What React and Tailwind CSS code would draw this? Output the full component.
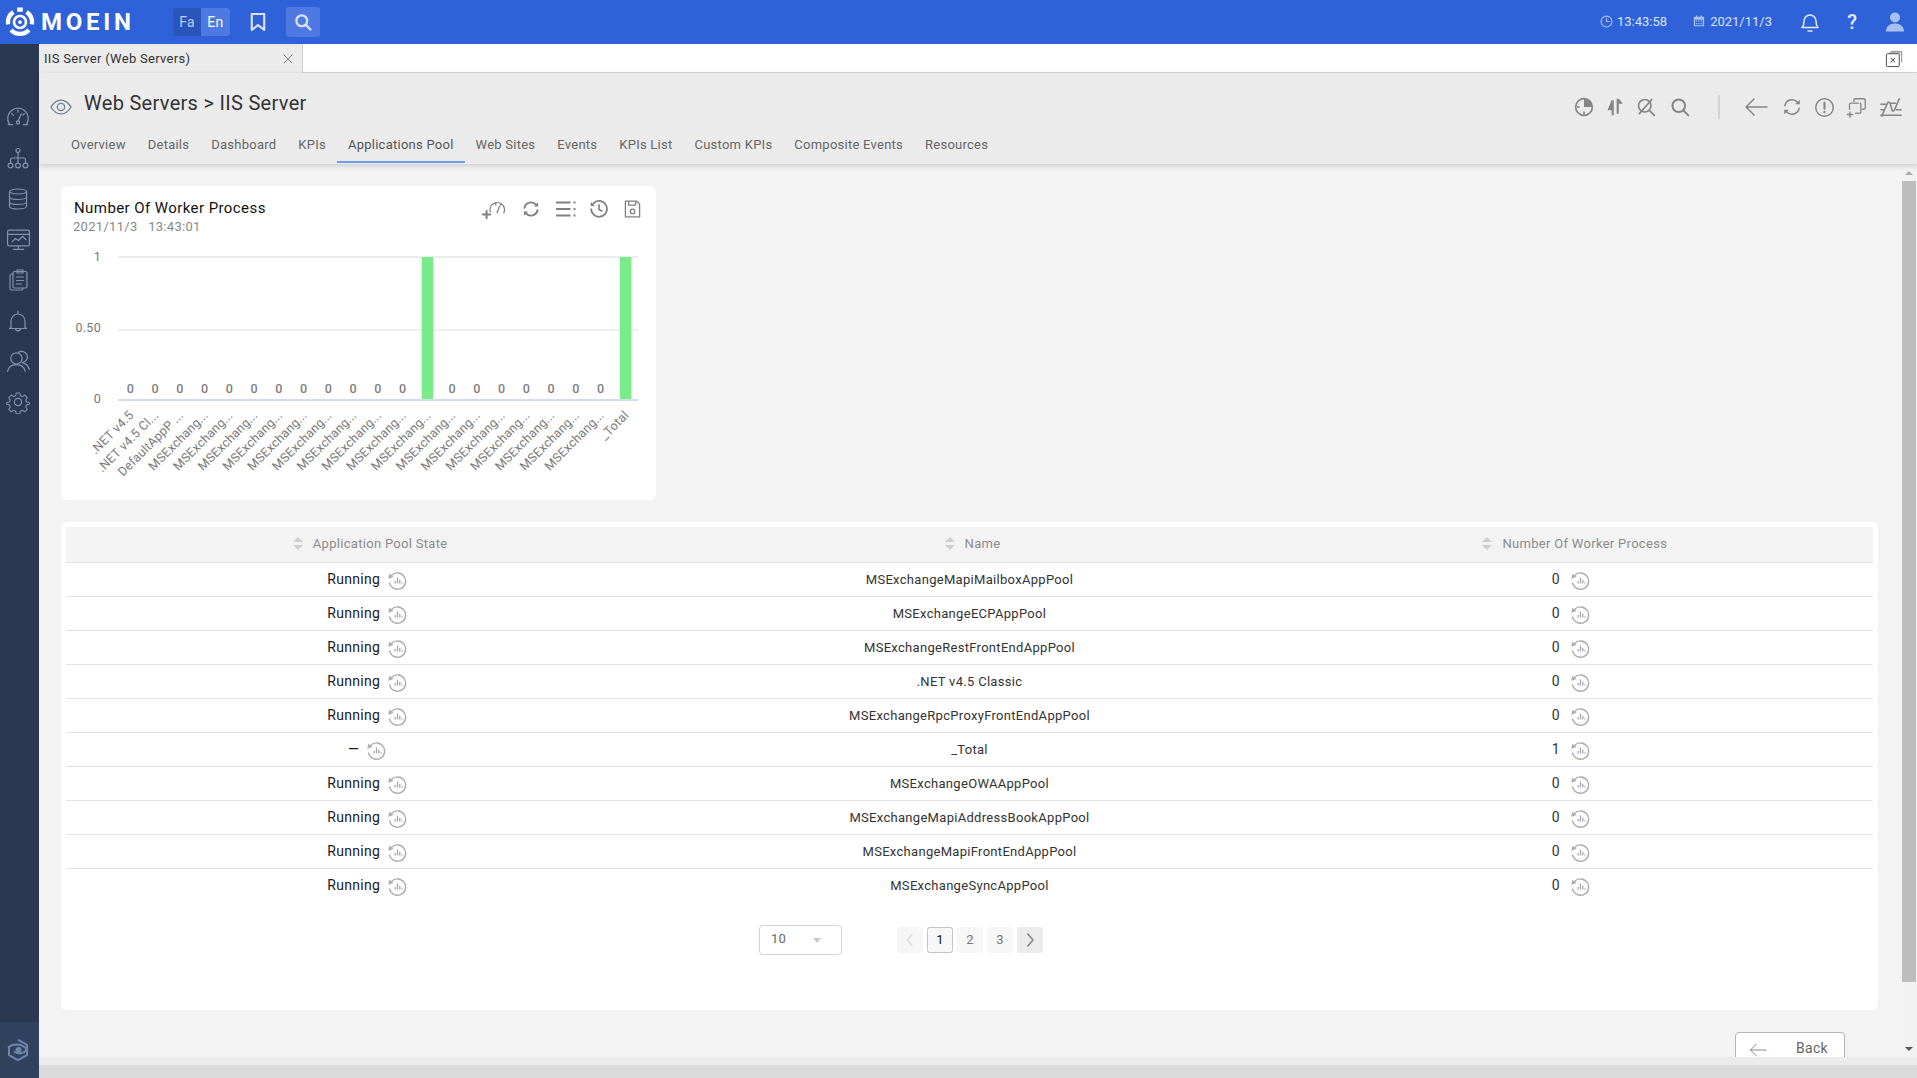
import React from "react";

const Svg = ({ className = "", vb = "0 0 24 24", sw = 1.5, children }) => (
  <svg viewBox={vb} fill="none" stroke="currentColor" strokeWidth={sw} strokeLinecap="round" strokeLinejoin="round" className={className}>
    {children}
  </svg>
);

const Logo = () => (
  <svg viewBox="0 0 32 32" className="w-[30px] h-[30px] text-white shrink-0" fill="none" stroke="currentColor">
    <path d="M9 5.500A13 13 0 0 0 3.400 18.500" strokeWidth="4.600" />
    <path d="M23 5.500A13 13 0 0 1 28.600 18.500" strokeWidth="4.600" />
    <path d="M6.500 24.500A13 13 0 0 0 25.500 24.500" strokeWidth="4.600" />
    <path d="M13 2.800h6" strokeWidth="4.600" />
    <circle cx="16" cy="16" r="6.400" strokeWidth="2.800" />
    <circle cx="16" cy="16" r="2" fill="currentColor" strokeWidth="0" />
  </svg>
);

const HistBars = ({ className = "" }) => (
  <svg viewBox="0 0 24 24" fill="none" className={className}>
    <path d="M5.400 6.600A9.800 9.800 0 1 1 3 15.500" stroke="currentColor" strokeWidth="1.700" strokeLinecap="round" />
    <path d="M1.500 10.500L2.600 4.500 8 8.300z" fill="currentColor" />
    <path d="M9 13.200h1.500v3H9zM11.800 9h1.500v7.200h-1.500zM14.600 11.800h1.500v4.400h-1.500zM17.300 14.800h1.500v1.400h-1.500z" fill="#a4a4b2" />
  </svg>
);

const Sync = ({ className = "", sw = 2 }) => (
  <Svg className={className} sw={sw}>
    <path d="M4.200 10.500A8 8 0 0 1 18 6.800" />
    <path d="M19.800 13.500A8 8 0 0 1 6 17.200" />
    <path d="M20.500 4v5h-5zM3.500 20v-5h5z" fill="currentColor" stroke="none" />
  </Svg>
);

const sideIcons = [
  <Svg key="a" sw={1.200} className="w-[26px] h-[26px]"><path d="M4 18.500a9.500 9.500 0 1 1 16 0M3 19h4M17 19h4M12 16l3-7M12 5.500v2M6.200 9l1.500 1.300M17.800 9l-1.500 1.300" /><circle cx="12" cy="17" r="1.400" /></Svg>,
  <Svg key="b" sw={1.200} className="w-[24px] h-[24px]"><circle cx="12" cy="4.500" r="2" /><path d="M12 6.500V12M4.500 17v-3a2 2 0 0 1 2-2h11a2 2 0 0 1 2 2v3M12 12v5" /><circle cx="4.500" cy="19.500" r="2.400" /><circle cx="12" cy="19.500" r="2.400" /><circle cx="19.500" cy="19.500" r="2.400" /></Svg>,
  <Svg key="c" sw={1.200} className="w-[24px] h-[24px]"><ellipse cx="12" cy="4.500" rx="8.500" ry="2.500" /><path d="M3.500 4.500v15c0 1.400 3.800 2.500 8.500 2.500s8.500-1.100 8.500-2.500v-15M3.500 10c0 1.400 3.800 2.500 8.500 2.500s8.500-1.100 8.500-2.500M3.500 15c0 1.400 3.800 2.500 8.500 2.500s8.500-1.100 8.500-2.500" /></Svg>,
  <Svg key="d" sw={1.200} className="w-[25px] h-[25px]"><rect x="1.500" y="3" width="21" height="15" rx="1.500" /><path d="M1.500 7h21M12 18v3.500M7 21.500h10M6 14l3-3 3 2 4-4 3 3" /></Svg>,
  <Svg key="e" sw={1.200} className="w-[24px] h-[24px]"><path d="M7 6H5.800A1.800 1.800 0 0 0 4 7.800v12.400A1.800 1.800 0 0 0 5.800 22h9.400a1.800 1.800 0 0 0 1.800-1.800V20" /><rect x="7" y="3.500" width="14" height="16.500" rx="1.600" /><path d="M11 2h6v3h-6zM10.500 9h7M10.500 12.500h7M10.500 16h5" /></Svg>,
  <Svg key="f" sw={1.200} className="w-[24px] h-[24px]"><path d="M12 2v2M5 18.500V12a7 7 0 0 1 14 0v6.500l1.500 1H3.500zM9.500 20a2.600 2.600 0 0 0 5 0" /></Svg>,
  <Svg key="g" sw={1.200} className="w-[25px] h-[25px]"><circle cx="10" cy="9" r="5.400" /><path d="M1.500 21.500c1-4.200 4-6.500 8.500-6.500s7.500 2.300 8.500 6.500M12 3.200A5.400 5.400 0 1 1 15.500 13c3.200.6 5.700 3 7 6.500" /></Svg>,
  <Svg key="h" sw={1.200} className="w-[24px] h-[24px]"><circle cx="12" cy="12" r="3.600" /><path d="M10 2h4l.6 3 2.300 1 2.600-1.700 2.800 2.800-1.700 2.600 1 2.300 3 .6v2l-3 .6-1 2.300 1.700 2.600-2.800 2.800-2.600-1.700-2.300 1-.6 3h-4l-.6-3-2.300-1-2.600 1.700-2.800-2.800 1.700-2.600-1-2.300-3-.6v-2l3-.6 1-2.300-1.700-2.600 2.800-2.800 2.600 1.700 2.300-1z" transform="translate(1.200 1.200) scale(.9)" /></Svg>,
];

const Sidebar = () => (
  <aside className="w-[39px] shrink-0 bg-[#2a3852] flex flex-col text-[#8293ad]">
    <div className="flex-1 pt-[53px] pr-[3px] flex flex-col">
      {sideIcons.map((ic, i) => (
        <div key={i} className="h-[40.700px] flex items-center justify-center">{ic}</div>
      ))}
    </div>
    <div className="h-[56px] pr-[3px] bg-[#31425f] flex items-center justify-center text-[#6e86aa]">
      <svg viewBox="0 0 24 24" className="w-[24px] h-[24px]" fill="none" stroke="currentColor" strokeWidth="2">
        <path d="M12 1.800l9 5v10.400l-9 5-9-5v-9" />
        <path d="M2 9.500C8 4.500 16 6 21 11.500c-3 4.200-9 5.200-13 2" />
        <circle cx="12.500" cy="12" r="3" fill="currentColor" stroke="none" />
      </svg>
    </div>
  </aside>
);

const TopBar = () => (
  <header className="h-[44px] shrink-0 bg-[#2f62d9] flex items-center text-[#d9e4fb]">
    <div className="ml-[5px] w-[30px]"><Logo /></div>
    <span className="ml-[6px] w-[96px] font-bold text-[24px] leading-none tracking-[3.700px] text-white">MOEIN</span>
    <div className="ml-[36px] flex h-[28px] text-[14px]">
      <span className="w-[28px] bg-[#2a55bb] rounded-l-[3px] flex items-center justify-center text-[#bcd0f7]">Fa</span>
      <span className="w-[29px] bg-[#4f79e2] rounded-r-[3px] flex items-center justify-center text-white">En</span>
    </div>
    <svg viewBox="0 0 18 22" className="ml-[20px] w-[16px] h-[20px]" fill="none" stroke="currentColor" strokeWidth="2.400" strokeLinejoin="round"><path d="M2 2h14v18l-7-5.500L2 20z" /></svg>
    <div className="ml-[20px] w-[34px] h-[30px] bg-[#4f79e2] rounded-[3px] flex items-center justify-center">
      <Svg className="w-[20px] h-[20px]" sw={2.800}><circle cx="10.500" cy="10.500" r="6.500" /><path d="M15.500 15.500L21 21" /></Svg>
    </div>
    <div className="ml-auto flex items-center tracking-normal">
      <Svg className="w-[13px] h-[13px] text-[#a9c0f2] -mt-[2px]" sw={2}><circle cx="12" cy="12" r="10" /><path d="M12 6v6h5" /></Svg>
      <span className="ml-[4px] text-[13px]">13:43:58</span>
      <svg viewBox="0 0 14 14" className="ml-[26px] w-[12px] h-[12px] text-[#a9c0f2] -mt-[2px]" fill="currentColor"><path d="M1 2h2.500V.5h1.500V2h4V.5h1.500V2H13v11H1zM2.500 5.500V12h9V5.500z" /><path d="M3.500 6.500h1.500V8H3.500zM6.200 6.500h1.500V8H6.200zM9 6.500h1.500V8H9zM3.500 9.200h1.500v1.500H3.500zM6.200 9.200h1.500v1.500H6.200zM9 9.200h1.500v1.500H9z" /></svg>
      <span className="ml-[5px] text-[13px]">2021/11/3</span>
      <Svg className="ml-[26px] w-[24px] h-[24px] text-[#e3ebfc]" sw={1.500}><path d="M4 17.500c1.500-1.500 2-3 2-6.500a6 6 0 0 1 12 0c0 3.500.5 5 2 6.500zM10 21h4" /></Svg>
      <span className="ml-[23px] w-[14px] text-center text-[20px] font-medium leading-none text-[#e3ebfc]">?</span>
      <svg viewBox="0 0 20 20" className="ml-[26px] mr-[12px] w-[20px] h-[20px] text-[#a9c0f2]" fill="currentColor"><circle cx="10" cy="5.500" r="5" /><path d="M1 19.500c0-5 3.500-8 9-8s9 3 9 8z" /></svg>
    </div>
  </header>
);

const TabBar = () => (
  <div className="h-[29px] shrink-0 bg-white border-b border-[#d6d6d6] flex items-stretch">
    <div className="w-[264px] bg-[#ebebeb] border-r border-[#d0d0d0] flex items-center pl-[5px] pr-[8px] -mb-px">
      <span className="text-[13px] text-[#333] flex-1">IIS Server (Web Servers)</span>
      <Svg className="w-[12px] h-[12px] text-[#777]" sw={1.800}><path d="M4 4l16 16M20 4L4 20" /></Svg>
    </div>
    <div className="ml-auto mr-[13px] flex items-center">
      <svg viewBox="0 0 20 20" className="w-[19px] h-[19px]" fill="none" stroke="#555" strokeWidth="1">
        <path d="M6 2.500h11.500V14" stroke="#8a8a8a" /><path d="M4.500 4h11.500v1" stroke="#8a8a8a" />
        <rect x="1.500" y="5" width="13.500" height="13.500" rx="1" stroke="#444" />
        <path d="M6 9.500l4.500 4.500M10.500 9.500L6 14" stroke="#333" />
      </svg>
    </div>
  </div>
);

const tabs = ["Overview", "Details", "Dashboard", "KPIs", "Applications Pool", "Web Sites", "Events", "KPIs List", "Custom KPIs", "Composite Events", "Resources"];

const ActionIcons = () => (
  <div className="flex items-center text-[#858585]">
    <Svg className="w-[20px] h-[20px]" sw={2}><circle cx="12" cy="12" r="10" /><path d="M12 2v10h10A10 10 0 0 0 12 2z" fill="currentColor" stroke="none" /><path d="M12 18v2M4 12h2" /></Svg>
    <svg viewBox="0 0 24 24" className="ml-[11px] w-[20px] h-[20px]" fill="currentColor"><path d="M8 4h2.500v18H8v-6H3zM14 20V2h2.500L21.500 8H16.500v12z" /></svg>
    <Svg className="ml-[11px] w-[20px] h-[20px]" sw={2}><circle cx="10.500" cy="10.500" r="7.500" /><path d="M16 16l6 6M4 20L19 3" /></Svg>
    <Svg className="ml-[14px] w-[20px] h-[20px]" sw={2.400}><circle cx="10.500" cy="10.500" r="7.500" /><path d="M16 16l6 6" /></Svg>
    <div className="ml-[28px] w-[2px] h-[24px] bg-[#d2d2d2]" />
    <Svg className="ml-[24px] w-[24px] h-[24px]" sw={1.500}><path d="M23 12H2M10 4l-8 8 8 8" /></Svg>
    <Sync className="ml-[13px] w-[22px] h-[22px]" sw={1.700} />
    <Svg className="ml-[11px] w-[21px] h-[21px]" sw={1.600}><circle cx="12" cy="12" r="10" /><path d="M12 6.500v7M12 17v.4" strokeWidth="2.400" /></Svg>
    <Svg className="ml-[11px] w-[21px] h-[21px]" sw={1.500}><path d="M9 5V3.500A1.500 1.500 0 0 1 10.500 2h10A1.500 1.500 0 0 1 22 3.500v9a1.500 1.500 0 0 1-1.500 1.500H19M14 7H5.500A1.500 1.500 0 0 0 4 8.500V14M16 7a1.500 1.500 0 0 1 1 1.500V17a1.500 1.500 0 0 1-1.500 1.500H11M4.500 17v6M1.500 20h6" /></Svg>
    <Svg className="ml-[11px] mr-[13px] w-[26px] h-[22px]" sw={1.700}><path d="M2 22l6-14c1-2 2-2 3 0l2 7c.6 2 2 2 3 0l5-12M1 9h5M12 8h5M1 15h4M18 15h5M1 21h22" /></Svg>
  </div>
);

const PageHeader = () => (
  <div className="h-[91px] shrink-0 bg-[#ebebeb] shadow-[0_2px_5px_rgba(0,0,0,0.16)] relative z-10 flex flex-col">
    <div className="h-[62px] flex items-center justify-between pl-[11px]">
      <div className="flex items-center">
        <Svg className="w-[22px] h-[22px] text-[#6f7f99] mt-[6px]" sw={1.400}><path d="M1 12c3-5 6.500-7.500 11-7.500S20 7 23 12c-3 5-6.500 7.500-11 7.500S4 17 1 12z" /><circle cx="12" cy="12" r="4" /></Svg>
        <span className="ml-[12px] text-[20px] leading-[28px] text-[#333] -mt-[3px]">Web Servers &gt; IIS Server</span>
      </div>
      <div className="mt-[6px]"><ActionIcons /></div>
    </div>
    <nav className="flex h-[28px] pl-[21px] text-[13px] tracking-[0.25px] text-[#666]">
      {tabs.map((t) => (
        <div key={t} className={t === "Applications Pool" ? "px-[11px] pb-[7px] flex items-center border-b-[2px] border-[#6f9df0] text-[#555]" : "px-[11px] pb-[7px] flex items-center border-b-[2px] border-transparent"}>{t}</div>
      ))}
    </nav>
  </div>
);

const names = [".NET v4.5", ".NET v4.5 Cl...", "DefaultAppP ...", ...Array(17).fill("MSExchang..."), "_Total"];
const vals = names.map((_, i) => (i === 12 || i === 20 ? 1 : 0));
const X0 = 57, PITCH = 24.76;

const Chart = () => (
  <svg width="595" height="264" className="block font-[Roboto]">
    <line x1={X0} x2="577" y1="21" y2="21" stroke="#e6e6e6" strokeWidth="1.500" />
    <line x1={X0} x2="577" y1="94" y2="94" stroke="#efefef" strokeWidth="2" />
    <text x="40" y="25" textAnchor="end" fontSize="12.500" fill="#777">1</text>
    <text x="40" y="96" textAnchor="end" fontSize="12.500" fill="#777">0.50</text>
    <text x="40" y="167" textAnchor="end" fontSize="12.500" fill="#777">0</text>
    {vals.map((v, i) => {
      const cx = X0 + PITCH * (i + 0.5);
      return v ? (
        <rect key={i} x={cx - 5.800} y="21" width="11.600" height="142" fill="#7aeb8a" />
      ) : (
        <text key={i} x={cx} y="157" textAnchor="middle" fontSize="12.500" fontWeight="500" fill="#808080">0</text>
      );
    })}
    <line x1={X0} x2="577" y1="164" y2="164" stroke="#d5dcef" strokeWidth="2" />
    {names.map((n, i) => {
      const x = X0 + PITCH * (i + 0.5) + 4;
      const y = 180;
      return (
        <text key={i} x={x} y={y} textAnchor="end" fontSize="12.500" letterSpacing=".2" fill="#7a7a7a" transform={`rotate(-45 ${x} ${y})`}>{n}</text>
      );
    })}
  </svg>
);

const ChartCard = () => (
  <section className="w-[595px] h-[314px] shrink-0 bg-white rounded-[6px] overflow-hidden">
    <div className="flex justify-between pl-[13px] pr-[14px] pt-[12px] h-[50px]">
      <div>
        <div className="text-[15px] leading-[20px] tracking-[0.42px] text-[#111]">Number Of Worker Process</div>
        <div className="-ml-[1px] mt-[1px] text-[13px] leading-[16px] text-[#888] whitespace-pre">2021/11/3   13:43:01</div>
      </div>
      <div className="flex items-start pt-[1px] text-[#808080]">
        <Svg className="w-[26px] h-[22px]" sw={1.400}><path d="M9 14a8 8 0 0 1 14-7M23.800 15a8 8 0 0 0-.8-8M19 8l-2.500 7M15 4.500v2M21 5.500l-1 1" /><path d="M1 17h8M5 13v8" strokeWidth="2.200" /></Svg>
        <Sync className="ml-[15px] w-[20px] h-[20px]" sw={2.300} />
        <svg viewBox="0 0 20 20" className="ml-[15px] w-[20px] h-[20px]" fill="currentColor"><path d="M0 2.500h14.500v2H0zM0 9h14.500v2H0zM0 15.500h14.500v2H0zM17.500 2.500h2v2h-2zM17.500 9h2v2h-2zM17.500 15.500h2v2h-2z" /></svg>
        <Svg className="ml-[13px] w-[20px] h-[20px]" sw={2}><path d="M5 5.500A9.500 9.500 0 1 1 2.600 12" /><path d="M2 3.500v5h5z" fill="currentColor" stroke="none" /><path d="M12 7v5.500l3.500 2" /></Svg>
        <Svg className="ml-[14px] w-[19px] h-[20px]" sw={1.600}><path d="M3 2h14l4 4v16H3zM7 2v5h9V2" /><circle cx="12" cy="15" r="2.800" /></Svg>
      </div>
    </div>
    <Chart />
  </section>
);

const rows = [
  ["Running", "MSExchangeMapiMailboxAppPool", "0"],
  ["Running", "MSExchangeECPAppPool", "0"],
  ["Running", "MSExchangeRestFrontEndAppPool", "0"],
  ["Running", ".NET v4.5 Classic", "0"],
  ["Running", "MSExchangeRpcProxyFrontEndAppPool", "0"],
  ["—", "_Total", "1"],
  ["Running", "MSExchangeOWAAppPool", "0"],
  ["Running", "MSExchangeMapiAddressBookAppPool", "0"],
  ["Running", "MSExchangeMapiFrontEndAppPool", "0"],
  ["Running", "MSExchangeSyncAppPool", "0"],
];

const Head = ({ label }) => (
  <th className="font-normal">
    <div className="flex items-center justify-center pl-[6px] -mt-[1px]">
      <span className="flex flex-col gap-[3px] mr-[10px]">
        <span className="block w-0 h-0 border-x-[5px] border-x-transparent border-b-[5px] border-b-[#cfcfcf]" />
        <span className="block w-0 h-0 border-x-[5px] border-x-transparent border-t-[5px] border-t-[#cfcfcf]" />
      </span>
      <span>{label}</span>
    </div>
  </th>
);

const Cell = ({ v, tone }) => (
  <div className={`flex items-center justify-center ${tone}`}>
    <span>{v}</span>
    <HistBars className="w-[20px] h-[20px] text-[#aeaeae] mt-[2px]" />
  </div>
);

const TableCard = () => (
  <section className="h-[488px] shrink-0 bg-white rounded-[6px] px-[5px] pt-[5px]">
    <table className="w-full table-fixed border-collapse">
      <thead>
        <tr className="h-[35px] bg-[#f3f3f3] border-b border-[#e3e3e3] text-[13px] text-[#8c8c8c]">
          <Head label="Application Pool State" />
          <Head label="Name" />
          <Head label="Number Of Worker Process" />
        </tr>
      </thead>
      <tbody>
        {rows.map((r, i) => (
          <tr key={i} className={i < 9 ? "h-[34px] border-b border-[#e3e3e3]" : "h-[34px]"}>
            <td className="p-0 text-[14px]"><Cell v={r[0]} tone="text-[#1a1a1a] gap-[7px]" /></td>
            <td className="p-0 pt-[1px] text-center text-[13px] text-[#333]">{r[1]}</td>
            <td className="p-0 text-[14px]"><Cell v={r[2]} tone="text-[#333] gap-[10px] -ml-[2px]" /></td>
          </tr>
        ))}
      </tbody>
    </table>
    <div className="flex items-center mt-[23px] pl-[693px]">
      <div className="w-[83px] h-[30px] border border-[#d4d4d4] rounded-[4px] flex items-center pl-[11px] pr-[20px] justify-between text-[13px] text-[#666]">
        <span className="-mt-[2px]">10</span>
        <span className="w-0 h-0 border-x-[4px] border-x-transparent border-t-[5px] border-t-[#c8c8c8]" />
      </div>
      <div className="ml-[55px] flex gap-[4px] text-[13px]">
        <span className="w-[26px] h-[26px] rounded-[3px] bg-[#f6f6f6] flex items-center justify-center text-[#dcdcdc]">
          <Svg className="w-[16px] h-[16px]" sw={2}><path d="M15 4l-7 8 7 8" /></Svg>
        </span>
        <span className="w-[26px] h-[26px] rounded-[3px] bg-[#f7f7f7] border border-[#c4c4c4] flex items-center justify-center text-[#111]">1</span>
        <span className="w-[26px] h-[26px] rounded-[3px] bg-[#f7f7f7] flex items-center justify-center text-[#777]">2</span>
        <span className="w-[26px] h-[26px] rounded-[3px] bg-[#f7f7f7] flex items-center justify-center text-[#777]">3</span>
        <span className="w-[26px] h-[26px] rounded-[3px] bg-[#ececec] flex items-center justify-center text-[#888]">
          <Svg className="w-[18px] h-[18px]" sw={2.200}><path d="M9 4l7 8-7 8" /></Svg>
        </span>
      </div>
    </div>
  </section>
);

const Scrollbar = () => (
  <div className="w-[16px] shrink-0 bg-[#f2f2f2] flex flex-col items-center pt-[7px] pb-[6px]">
    <span className="w-0 h-0 border-x-[4px] border-x-transparent border-b-[4px] border-b-[#aaaaaa]" />
    <div className="mt-[6px] w-[14px] h-[801px] bg-[#bdbdbd]" />
    <span className="mt-auto w-0 h-0 border-x-[4px] border-x-transparent border-t-[4px] border-t-[#555555]" />
  </div>
);

export default function App() {
  return (
    <div className="h-[1078px] w-full overflow-hidden flex flex-col font-[Roboto] tracking-[0.3px] bg-[#f3f3f3]">
      <TopBar />
      <div className="flex-1 flex min-h-0">
        <Sidebar />
        <main className="flex-1 min-w-0 flex flex-col">
          <TabBar />
          <PageHeader />
          <div className="flex-1 min-h-0 flex">
            <div className="flex-1 min-w-0 overflow-hidden pl-[22px] pr-[23px] pt-[22px] flex flex-col gap-[22px]">
              <ChartCard />
              <TableCard />
              <div className="shrink-0 flex justify-end pr-[33px]">
                <button className="w-[110px] h-[40px] shrink-0 border border-[#b5b5b5] rounded-[4px] bg-white flex items-start pt-[6px] pl-[13px] text-[14px] leading-[18px] text-[#666]">
                  <Svg className="w-[18px] h-[18px] text-[#7a8794] mt-[2px]" sw={1.300}><path d="M23 12H2M10 4l-8 8 8 8" /></Svg>
                  <span className="ml-[29px]">Back</span>
                </button>
              </div>
            </div>
            <Scrollbar />
          </div>
          <div className="h-[8px] shrink-0 bg-[#ebebeb]" />
          <div className="h-[13px] shrink-0 bg-[#dadada]" />
        </main>
      </div>
    </div>
  );
}
